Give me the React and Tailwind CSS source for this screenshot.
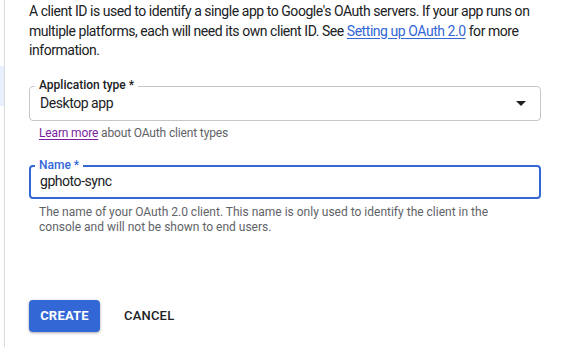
export default function App() {
  return (
    <div
      className="w-[581px] h-[347px] bg-white flex overflow-hidden"
      style={{ fontFamily: "Roboto, 'Liberation Sans', sans-serif" }}
    >
      <div className="w-[4px] shrink-0 pt-[66px]">
        <div className="h-[40px] bg-[#e8f0fe]" />
      </div>
      <div className="w-px shrink-0 bg-[#dadce0]" />
      <div className="flex-1 pl-[24px] pt-[2px]">
        <p className="w-[510px] text-[14px] leading-[19.5px] tracking-[-0.45px] text-[#202124]">
          A client ID is used to identify a single app to Google's OAuth servers. If your app runs on
          multiple platforms, each will need its own client ID. See{" "}
          <span className="text-[#3367d6] underline underline-offset-2">Setting up OAuth 2.0</span>{" "}
          for more information.
        </p>

        <div className="mt-[25px] w-[512px] relative">
          <div className="h-[35px] rounded-[4px] border border-[#c6c6c6] flex items-center pl-[10px] pr-[14px] justify-between">
            <span className="text-[14px] tracking-[-0.45px] text-[#202124]">Desktop app</span>
            <svg width="10" height="5" viewBox="0 0 10 5">
              <path d="M0 0 L10 0 L5 5 Z" fill="#202124" />
            </svg>
          </div>
          <span className="absolute left-[6px] top-[-8px] bg-white px-[4px] text-[12px] leading-[14px] font-medium text-[#202124]">
            Application type *
          </span>
        </div>
        <div className="pl-[10px] mt-[4px] text-[12px] leading-[16px] tracking-[-0.15px] text-[#5f6368]">
          <span className="text-[#7b1fa2] underline underline-offset-2">Learn more</span> about OAuth client types
        </div>

        <div className="mt-[24px] w-[512px] relative">
          <div className="h-[34px] rounded-[4px] border-2 border-[#3367d6] flex items-center pl-[9px]">
            <span className="text-[14px] tracking-[-0.45px] text-[#202124]">gphoto-sync</span>
          </div>
          <span className="absolute left-[6px] top-[-7px] bg-white px-[4px] text-[12px] leading-[14px] font-medium text-[#3367d6]">
            Name *
          </span>
        </div>
        <div className="pl-[10px] mt-[6px] w-[480px] text-[12px] leading-[15.5px] text-[#5f6368]">
          The name of your OAuth 2.0 client. This name is only used to identify the client in the
          console and will not be shown to end users.
        </div>

        <div className="mt-[64px] flex items-center gap-[24px]">
          <button className="h-[32px] w-[71px] rounded-[4px] bg-[#3367d6] text-white text-[13px] font-bold tracking-[0.2px] shadow-[0_1px_3px_rgba(0,0,0,0.35)]">
            CREATE
          </button>
          <button className="text-[13px] font-medium text-[#202124] tracking-[0.2px]">CANCEL</button>
        </div>
      </div>
    </div>
  );
}
